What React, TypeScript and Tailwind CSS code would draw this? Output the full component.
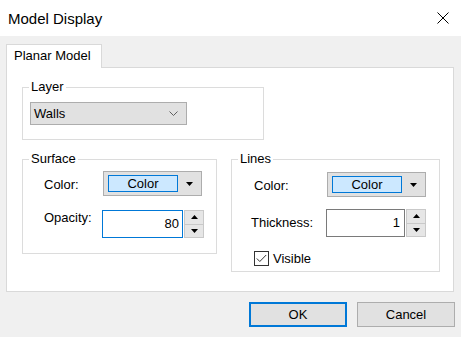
import React from 'react';

// small glyphs used across the dialog
const TriDown = () => (
  <svg width="7" height="4" viewBox="0 0 7 4" className="block">
    <path d="M0 0 L7 0 L3.5 4 Z" fill="#000" />
  </svg>
);

const TriUp = () => (
  <svg width="7" height="4" viewBox="0 0 7 4" className="block">
    <path d="M0 4 L7 4 L3.5 0 Z" fill="#000" />
  </svg>
);

function ColorButton() {
  return (
    <div className="flex items-center w-[99px] h-[25px] border border-[#adadad] bg-[#e1e1e1] pl-[4px]">
      <div className="w-[70px] h-[17px] border border-[#0078d7] bg-[#cce8ff] flex items-center justify-center text-[13px] leading-none">
        Color
      </div>
      <div className="flex-1 flex justify-center">
        <TriDown />
      </div>
    </div>
  );
}

function Spinner({ w }: { w: string }) {
  return (
    <div className={`flex flex-col h-[28px] ${w}`}>
      <div className="flex-1 flex items-center justify-center border border-[#c9c9c9] bg-[#e6e6e6]">
        <TriUp />
      </div>
      <div className="flex-1 flex items-center justify-center border border-t-0 border-[#c9c9c9] bg-[#e6e6e6]">
        <TriDown />
      </div>
    </div>
  );
}

export default function App() {
  return (
    <div className="w-[461px] h-[337px] bg-[#f0f0f0] font-['Liberation_Sans',Arial,sans-serif] text-black flex flex-col overflow-hidden">
      {/* Title bar */}
      <div className="h-[36px] bg-white flex items-center justify-between pl-[8px] pr-[12px]">
        <span className="text-[15px] leading-none">Model Display</span>
        <svg width="12" height="12" viewBox="0 0 12 12">
          <path d="M0.5 0.5 L11.5 11.5 M11.5 0.5 L0.5 11.5" stroke="#000" strokeWidth="1" />
        </svg>
      </div>

      <div className="px-[6px] pt-[8px]">
        {/* Tab header */}
        <div className="relative z-10 -mb-px w-[96px] h-[24px] border border-b-0 border-[#d9d9d9] bg-white pl-[7px] text-[13px] leading-[22px]">
          Planar Model
        </div>

        {/* Tab panel */}
        <div className="w-[448px] h-[225px] border border-[#d9d9d9] bg-white pl-[15px] pt-[11px]">
          <fieldset className="w-[242px] h-[61px] border border-[#dcdcdc] m-0 p-0">
            <legend className="ml-[6px] px-[2px] h-[16px] text-[13px] leading-[16px]">Layer</legend>
            <div className="mt-[7px] ml-[7px] w-[157px] h-[23px] border border-[#adadad] bg-[#e1e1e1] flex items-center justify-between pl-[3px] pr-[8px] text-[13px]">
              <span>Walls</span>
              <svg width="9" height="5" viewBox="0 0 9 5">
                <path d="M0.5 0.5 L4.5 4.5 L8.5 0.5" stroke="#606060" strokeWidth="1" fill="none" />
              </svg>
            </div>
          </fieldset>

          <div className="flex items-start gap-[14px] mt-[11px]">
            {/* Surface */}
            <fieldset className="w-[195px] h-[103px] border border-[#dcdcdc] m-0 p-0">
              <legend className="ml-[6px] px-[2px] h-[16px] text-[13px] leading-[16px]">Surface</legend>
              <div className="pl-[21px] pt-[4px] text-[13px]">
                <div className="flex items-center">
                  <span className="w-[59px] pt-[3px]">Color:</span>
                  <ColorButton />
                </div>
                <div className="flex items-start mt-[14px]">
                  <span className="w-[58px] leading-[15px]">Opacity:</span>
                  <div className="w-[81px] h-[28px] border border-[#0078d7] flex items-center justify-end pr-[3px]">
                    80
                  </div>
                  <Spinner w="w-[20px] ml-[1px]" />
                </div>
              </div>
            </fieldset>

            {/* Lines */}
            <fieldset className="w-[209px] h-[121px] border border-[#dcdcdc] m-0 p-0">
              <legend className="ml-[6px] px-[2px] h-[16px] text-[13px] leading-[16px]">Lines</legend>
              <div className="pt-[5px] text-[13px]">
                <div className="flex items-center pl-[22px]">
                  <span className="w-[73px] pt-[3px]">Color:</span>
                  <ColorButton />
                </div>
                <div className="flex items-center mt-[12px] pl-[19px]">
                  <span className="w-[75px]">Thickness:</span>
                  <div className="w-[79px] h-[28px] border border-[#7a7a7a] flex items-center justify-end pr-[4px]">
                    1
                  </div>
                  <Spinner w="w-[20px] ml-[1px]" />
                </div>
                <div className="flex items-center mt-[12px] pl-[22px]">
                  <div className="w-[15px] h-[15px] border border-[#333] flex items-center justify-center">
                    <svg width="11" height="9" viewBox="0 0 11 9">
                      <path d="M0.8 4.5 L3.8 7.5 L10.2 1" stroke="#333" strokeWidth="1" fill="none" />
                    </svg>
                  </div>
                  <span className="ml-[4px]">Visible</span>
                </div>
              </div>
            </fieldset>
          </div>
        </div>
      </div>

      {/* Buttons */}
      <div className="flex justify-end gap-[10px] pr-[6px] mt-[10px] text-[13px]">
        <div className="w-[98px] h-[25px] border-2 border-[#0078d7] bg-[#e1e1e1] flex items-center justify-center">
          OK
        </div>
        <div className="w-[98px] h-[25px] border border-[#adadad] bg-[#e1e1e1] flex items-center justify-center">
          Cancel
        </div>
      </div>
    </div>
  );
}
